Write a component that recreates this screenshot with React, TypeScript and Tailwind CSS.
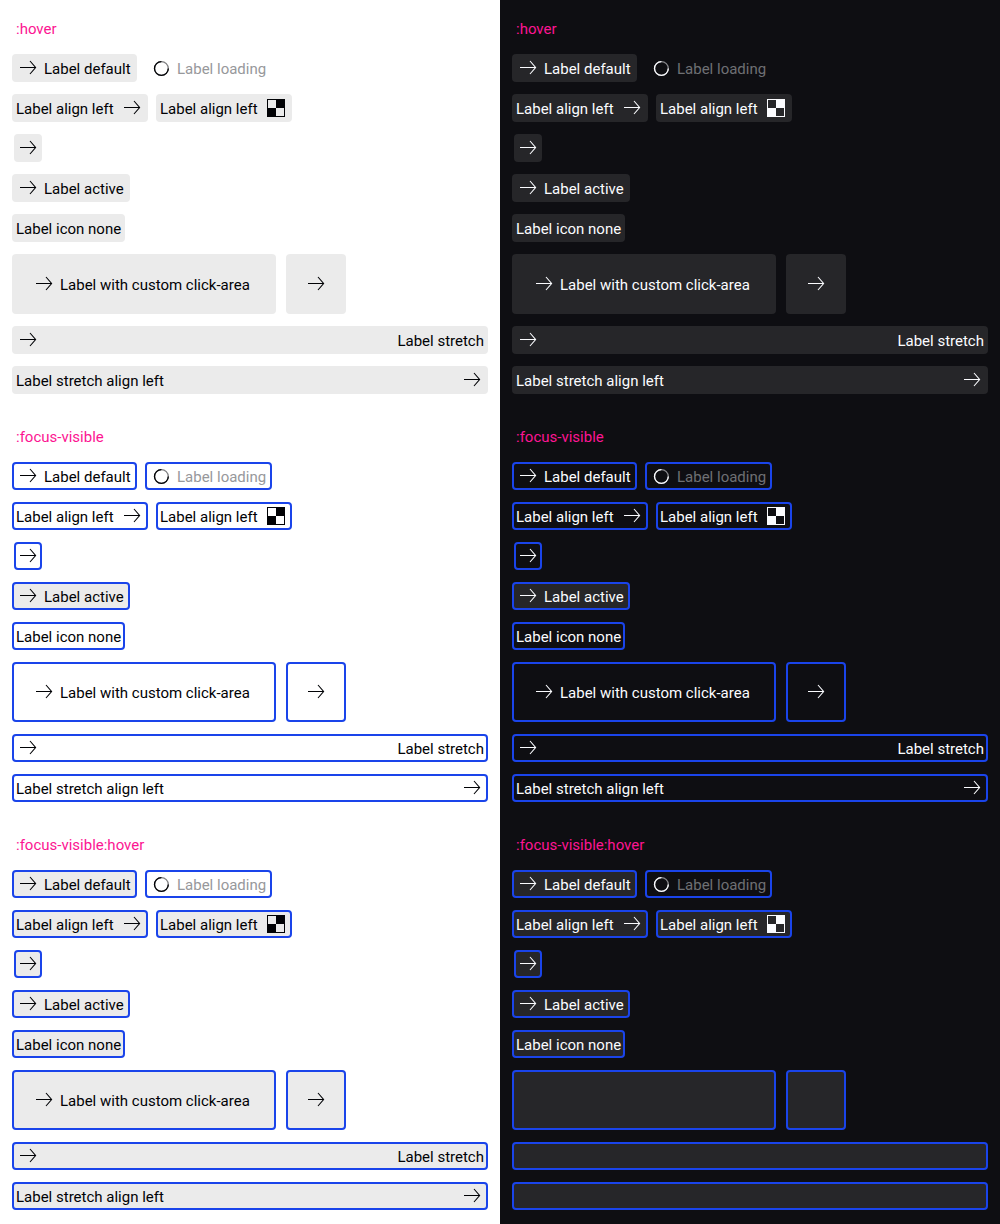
import type { ReactNode } from 'react';

type IconName = 'arrow' | 'spinner' | 'checker' | 'none';

function Icon({ name }: { name: IconName }) {
  if (name === 'arrow') {
    return (
      <svg className="size-6 shrink-0" viewBox="0 0 24 24" fill="none" stroke="currentColor" aria-hidden="true">
        <path d="M4 11.5H19.5" />
        <path d="M14 5L19.6 11.5L14 18" strokeWidth="1.1" />
      </svg>
    );
  }
  if (name === 'spinner') {
    return (
      <svg className="size-6 shrink-0" viewBox="0 0 24 24" fill="none" strokeWidth="1.3" aria-hidden="true">
        <circle cx="12.4" cy="12.5" r="6.9" stroke="currentColor" strokeOpacity="0.5" />
        <path d="M19.3 12.5A6.9 6.9 0 1 1 12.4 5.6" stroke="currentColor" />
      </svg>
    );
  }
  if (name === 'checker') {
    return (
      <svg className="size-6 shrink-0" viewBox="0 0 24 24" fill="none" aria-hidden="true">
        <rect x="3.5" y="3.5" width="17" height="17" stroke="currentColor" />
        <path d="M12 3h9v9h-9zM3 12h9v9H3z" fill="currentColor" />
      </svg>
    );
  }
  return null;
}

type Mode = 'hover' | 'focus' | 'both';
type Theme = 'light' | 'dark';

interface PureButtonProps {
  mode: Mode;
  theme: Theme;
  icon?: IconName;
  alignLeft?: boolean;
  alignEnd?: boolean;
  active?: boolean;
  loading?: boolean;
  size: string;
  children?: ReactNode;
}

function PureButton({ mode, theme, icon = 'arrow', alignLeft, alignEnd, active, loading, size, children }: PureButtonProps) {
  const filled = !loading && (mode !== 'focus' || active);
  const fill = filled ? (theme === 'light' ? 'bg-[#ebebeb]' : 'bg-[#262629]') : '';
  const ring = mode === 'hover' ? 'border-transparent' : 'border-[#1a44ea]';
  const muted = theme === 'light' ? 'text-[#97989b]' : 'text-[#6f7074]';
  return (
    <button
      type="button"
      className={`flex items-center justify-between gap-1 rounded-[4px] border-2 whitespace-nowrap ${size} ${fill} ${ring} ${alignLeft ? 'flex-row-reverse' : ''}`}
    >
      <Icon name={icon} />
      {children && (
        <span className={`grow pt-[2px] ${alignEnd ? 'text-right' : 'text-left'} ${loading ? muted : ''}`}>
          {children}
        </span>
      )}
    </button>
  );
}

function Section({ title, mode, theme, blank }: { title: string; mode: Mode; theme: Theme; blank?: boolean }) {
  const p = { mode, theme };
  return (
    <section className="px-3 pt-[17px] pb-[14px]">
      <h2 className="mb-[13px] px-1 text-[#fc1592]">{title}</h2>
      <div className="flex flex-col gap-3">
        <div className="flex gap-2">
          <PureButton {...p} size="h-7 min-w-[125px] px-[2px]">Label default</PureButton>
          <PureButton {...p} size="h-7 min-w-[127px] px-[2px]" icon="spinner" loading>Label loading</PureButton>
        </div>
        <div className="flex gap-2">
          <PureButton {...p} size="h-7 min-w-[136px] px-[2px]" alignLeft>Label align left</PureButton>
          <PureButton {...p} size="h-7 min-w-[136px] px-[2px]" icon="checker" alignLeft>Label align left</PureButton>
        </div>
        <div className="flex px-[2px]">
          <PureButton {...p} size="size-7" />
        </div>
        <div className="flex">
          <PureButton {...p} size="h-7 min-w-[118px] px-[2px]" active>Label active</PureButton>
        </div>
        <div className="flex">
          <PureButton {...p} size="h-7 min-w-[113px] px-[2px]" icon="none">Label icon none</PureButton>
        </div>
        <div className="flex gap-[10px]">
          {blank ? (
            <>
              <PureButton {...p} size="h-[60px] min-w-[264px]" icon="none" />
              <PureButton {...p} size="size-[60px]" icon="none" />
            </>
          ) : (
            <>
              <PureButton {...p} size="h-[60px] min-w-[264px] px-[18px]">Label with custom click-area</PureButton>
              <PureButton {...p} size="size-[60px] px-4" />
            </>
          )}
        </div>
        <PureButton {...p} size="h-7 w-full px-[2px]" icon={blank ? 'none' : 'arrow'} alignEnd>
          {blank ? null : 'Label stretch'}
        </PureButton>
        <PureButton {...p} size="h-7 w-full px-[2px]" icon={blank ? 'none' : 'arrow'} alignLeft>
          {blank ? null : 'Label stretch align left'}
        </PureButton>
      </div>
    </section>
  );
}

function Column({ theme }: { theme: Theme }) {
  return (
    <div className={theme === 'light' ? 'bg-white text-[#010205]' : 'bg-[#0e0e12] text-[#fbfcff]'}>
      <Section title=":hover" mode="hover" theme={theme} />
      <Section title=":focus-visible" mode="focus" theme={theme} />
      <Section title=":focus-visible:hover" mode="both" theme={theme} blank={theme === 'dark'} />
    </div>
  );
}

export default function App() {
  return (
    <main className="grid min-h-screen grid-cols-2 font-['Roboto',sans-serif] text-[15px] leading-6">
      <Column theme="light" />
      <Column theme="dark" />
    </main>
  );
}
